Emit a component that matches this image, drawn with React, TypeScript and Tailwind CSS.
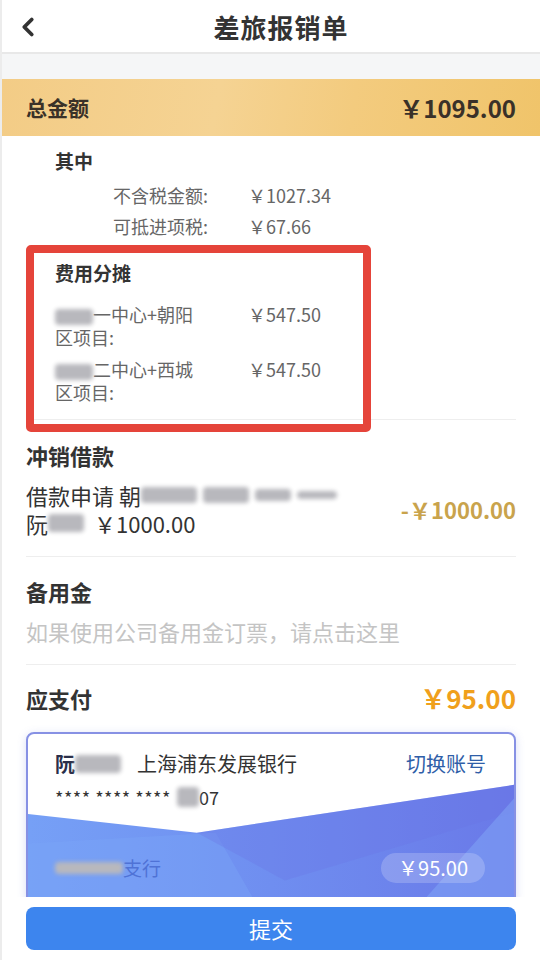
import { ChevronLeft } from 'lucide-react'

const font = { fontFamily: '"Noto Sans CJK SC", "Noto Sans", sans-serif' }

const Blur = ({ w, h = 16, className = '' }: { w: number; h?: number; className?: string }) => (
  <span
    className={`inline-block rounded-sm bg-[#b8b8bd] blur-[2px] align-middle ${className}`}
    style={{ width: w, height: h }}
  />
)

const CardWave = () => (
  <svg className="absolute inset-0 h-full w-full" viewBox="0 0 492 172" preserveAspectRatio="none">
    <defs>
      <linearGradient id="wave" x1="0" y1="0" x2="1" y2="0">
        <stop offset="0" stopColor="#76a0f6" />
        <stop offset="0.5" stopColor="#6f8ef0" />
        <stop offset="1" stopColor="#6a79e8" />
      </linearGradient>
    </defs>
    <polygon points="0,82 171,101 492,52 492,172 0,172" fill="url(#wave)" />
    <polygon points="0,112 190,101 230,172 0,172" fill="#7aa6f7" opacity="0.4" />
    <polygon points="171,101 492,52 492,80 260,150" fill="#6a73e6" opacity="0.3" />
    <polygon points="399,172 492,66 492,172" fill="#7fa4f6" opacity="0.55" />
  </svg>
)

export default function App() {
  return (
    <div className="flex h-[960px] w-[540px] flex-col overflow-hidden border-l-2 border-[#ececec] bg-white text-[#333]" style={font}>
      {/* Header */}
      <div className="relative flex h-[54px] shrink-0 items-center justify-center border-b-2 border-[#e8e8e8] pl-[20px]">
        <ChevronLeft className="absolute left-[11px] top-[12px] h-[30px] w-[30px] text-[#333]" strokeWidth={3} />
        <h1 className="text-[26px] font-bold tracking-[1px] text-[#333]">差旅报销单</h1>
      </div>

      <div className="relative flex-1 overflow-hidden">
        <div className="h-[25px] bg-[#f5f6f7]" />

        {/* Total */}
        <div className="flex h-[57px] items-center justify-between bg-[linear-gradient(100deg,#f3cc86_0%,#f5d393_40%,#f3cb7e_65%,#f0c46a_100%)] px-6">
          <span className="text-[21px] font-bold text-[#3a3128]">总金额</span>
          <span className="text-[24px] font-bold text-[#3a3128]">￥1095.00</span>
        </div>

        <div className="px-6">
          <div className="border-b border-[#eeeeee] pb-[15px] pl-[29px] pt-[12px]">
            <div className="text-[19px] font-bold leading-[26px]">其中</div>
            <div className="mt-[6px] text-[18px] leading-[31px] text-[#666]">
              <div className="flex pl-[58px]">
                <span className="w-[135px]">不含税金额:</span>
                <span>￥1027.34</span>
              </div>
              <div className="flex pl-[58px]">
                <span className="w-[135px]">可抵进项税:</span>
                <span>￥67.66</span>
              </div>
            </div>

            <div className="mt-[18px] text-[19px] font-bold leading-[26px]">费用分摊</div>
            <div className="mt-[17px] text-[18px] leading-[23px] text-[#666]">
              <div className="flex">
                <span className="w-[193px]">
                  <Blur w={38} h={16} />一中心+朝阳
                  <br />
                  区项目:
                </span>
                <span>￥547.50</span>
              </div>
              <div className="mt-[9px] flex">
                <span className="w-[193px]">
                  <Blur w={38} h={16} />二中心+西城
                  <br />
                  区项目:
                </span>
                <span>￥547.50</span>
              </div>
            </div>
          </div>

          {/* Loan */}
          <div className="border-b border-[#eeeeee] pb-[19px] pt-[21px]">
            <div className="text-[22px] font-bold leading-[28px]">冲销借款</div>
            <div className="mt-[12px] flex items-center justify-between">
              <div className="text-[22px] leading-[28px] text-[#333]">
                <div className="flex items-center">
                  借款申请 朝
                  <Blur w={56} h={16} />
                  <Blur w={46} h={16} className="ml-[6px]" />
                  <Blur w={36} h={12} className="ml-[6px]" />
                  <Blur w={40} h={8} className="ml-[6px]" />
                </div>
                <div className="flex items-center">
                  阮<Blur w={36} h={18} />
                  <span className="ml-[10px]">￥1000.00</span>
                </div>
              </div>
              <span className="text-[22px] font-bold text-[#c9a34c]">-￥1000.00</span>
            </div>
          </div>

          {/* Petty cash */}
          <div className="border-b border-[#eeeeee] pb-[19px] pt-[20px]">
            <div className="text-[22px] font-bold leading-[28px]">备用金</div>
            <div className="mt-[12px] text-[22px] leading-[28px] text-[#c4c4c4]">如果使用公司备用金订票，请点击这里</div>
          </div>

          {/* Payable */}
          <div className="flex items-center justify-between pt-[19px]">
            <span className="text-[22px] font-bold leading-[28px]">应支付</span>
            <span className="text-[26px] font-bold leading-[28px] text-[#f0a01c]">￥95.00</span>
          </div>

          {/* Bank card */}
          <div className="relative mt-[20px] h-[172px] overflow-hidden rounded-lg border-2 border-[#8791e4] bg-white shadow-[0_2px_8px_rgba(100,120,220,0.25)]">
            <CardWave />
            <div className="relative flex flex-col pl-[27px] pr-[28px] pt-[16px]">
              <div className="flex items-center text-[20px] leading-[28px]">
                <span className="font-bold text-[#2a2f4a]">阮</span>
                <Blur w={46} h={18} />
                <span className="ml-[16px] text-[#333]">上海浦东发展银行</span>
                <span className="ml-auto text-[#2f5ea8]">切换账号</span>
              </div>
              <div className="mt-[6px] flex items-center text-[18px] leading-[26px] text-[#333]">
                <span className="tracking-[0.5px]">**** **** ****</span>
                <Blur w={22} h={20} className="ml-[6px]" />
                <span>07</span>
              </div>
              <div className="mt-[43px] flex items-center justify-between">
                <div className="flex items-center text-[19px] text-[#4f72d6]">
                  <Blur w={68} h={12} className="bg-[#8aa5ee]" />
                  <span>支行</span>
                </div>
                <span className="mr-[1px] rounded-full bg-white/20 px-[17px] py-[1px] text-[20px] leading-[28px] text-white">￥95.00</span>
              </div>
            </div>
          </div>
        </div>

        {/* Red annotation box */}
        <div className="pointer-events-none absolute left-[24px] top-[191px] h-[187px] w-[345px] rounded-[5px] border-[8px] border-[#e5443a]" />
      </div>

      {/* Footer */}
      <div className="h-[63px] shrink-0 bg-white px-6 pt-[10px]">
        <button className="h-[43px] w-full rounded-lg bg-[#3d85ee] text-[22px] text-white">提交</button>
      </div>
    </div>
  )
}
